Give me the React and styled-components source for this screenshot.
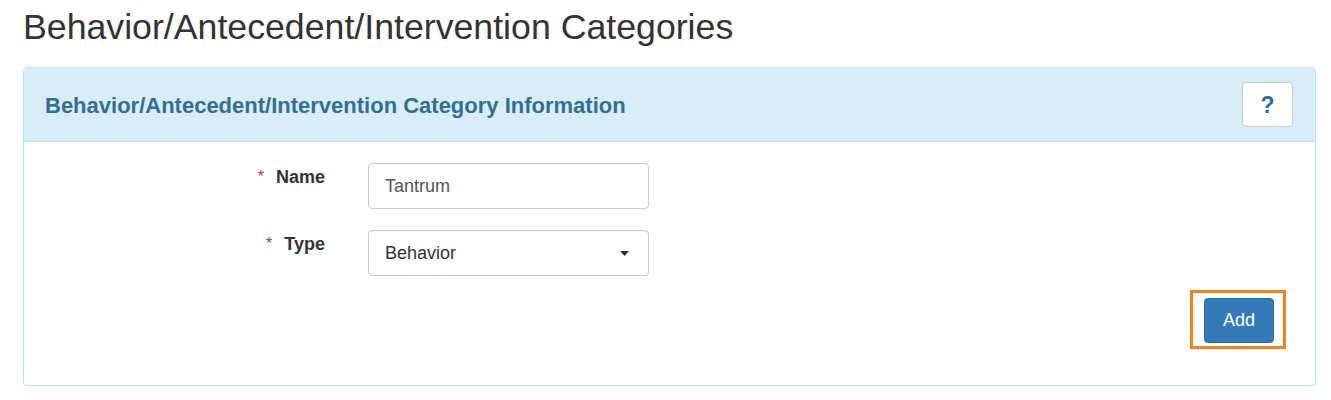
import React from "react";
import styled, { createGlobalStyle } from "styled-components";

const Global = createGlobalStyle`
  html, body { margin: 0; padding: 0; background: #fff; }
  body {
    font-family: "Liberation Sans", Arial, Helvetica, sans-serif;
    font-size: 18px;
    color: #333;
  }
  * { box-sizing: border-box; }
`;

const Page = styled.div`
  padding: 0 15px 0 23px;
`;

const Title = styled.h1`
  margin: 7px 0 20px;
  font-size: 35.7px;
  line-height: 40px;
  font-weight: 400;
  color: #333;
`;

const Panel = styled.section`
  border: 1px solid #bce8f1;
  border-radius: 4px;
  background: #fff;
  box-shadow: 0 1px 1px rgba(0, 0, 0, 0.05);
`;

const PanelHeading = styled.div`
  display: flex;
  align-items: center;
  justify-content: space-between;
  padding: 14px 22px 14px 21px;
  background: #d9edf7;
  border-bottom: 1px solid #bce8f1;
  border-radius: 3px 3px 0 0;
`;

const PanelTitle = styled.h3`
  margin: 0;
  padding-top: 2px;
  font-size: 22px;
  line-height: 26px;
  font-weight: 700;
  color: #31708f;
`;

const HelpButton = styled.button`
  width: 51px;
  height: 45px;
  display: flex;
  align-items: center;
  justify-content: center;
  background: #fff;
  border: 1px solid #ccc;
  border-radius: 4px;
  font-family: inherit;
  font-size: 23px;
  font-weight: 700;
  color: #31708f;
  padding: 2px 0 0;
  cursor: pointer;
`;

const PanelBody = styled.div`
  padding: 21px 22px 36px 22px;
`;

const Form = styled.form`
  display: grid;
  grid-template-columns: 279px 281px;
  column-gap: 43px;
  row-gap: 21px;
  align-items: start;
`;

const Label = styled.label`
  display: flex;
  justify-content: flex-end;
  align-items: flex-start;
  padding-top: 2px;
  font-size: 18px;
  line-height: 25px;
  font-weight: 700;
  color: #333;
`;

const Required = styled.span`
  font-weight: 400;
  font-size: 16px;
  line-height: 24px;
  color: #a94442;
  margin-right: 12px;
`;

const fieldBase = `
  width: 281px;
  height: 46px;
  border: 1px solid #ccc;
  border-radius: 4px;
  background: #fff;
  font-family: "Liberation Sans", Arial, Helvetica, sans-serif;
  font-size: 18px;
  padding: 0 16px;
  box-shadow: inset 0 1px 1px rgba(0, 0, 0, 0.04);
`;

const TextInput = styled.input`
  ${fieldBase}
  color: #555;
  outline: none;
`;

const SelectBox = styled.div`
  ${fieldBase}
  display: flex;
  align-items: center;
  justify-content: space-between;
  padding-right: 19px;
  color: #333;
`;

const Caret = styled.svg`
  width: 9px;
  height: 5px;
  display: block;
`;

const Actions = styled.div`
  display: flex;
  justify-content: flex-end;
  margin-top: 14px;
  padding-right: 7px;
`;

const Highlight = styled.span`
  display: inline-flex;
  border: 3px solid #f58220;
  padding: 5px 9px 3px 11px;
`;

const PrimaryButton = styled.button`
  width: 70px;
  height: 45px;
  background: #337ab7;
  border: 1px solid #2e6da4;
  border-radius: 4px;
  color: #fff;
  font-family: inherit;
  font-size: 18px;
  padding: 0;
  cursor: pointer;
`;

export default function App() {
  return (
    <Page>
      <Global />
      <Title>Behavior/Antecedent/Intervention Categories</Title>
      <Panel>
        <PanelHeading>
          <PanelTitle>Behavior/Antecedent/Intervention Category Information</PanelTitle>
          <HelpButton type="button">?</HelpButton>
        </PanelHeading>
        <PanelBody>
          <Form onSubmit={(e) => e.preventDefault()}>
            <Label>
              <Required>*</Required>Name
            </Label>
            <TextInput defaultValue="Tantrum" />
            <Label>
              <Required>*</Required>Type
            </Label>
            <SelectBox>
              <span>Behavior</span>
              <Caret viewBox="0 0 9 5">
                <path d="M0 0 L9 0 L4.5 5 Z" fill="#333" />
              </Caret>
            </SelectBox>
          </Form>
          <Actions>
            <Highlight>
              <PrimaryButton type="button">Add</PrimaryButton>
            </Highlight>
          </Actions>
        </PanelBody>
      </Panel>
    </Page>
  );
}
